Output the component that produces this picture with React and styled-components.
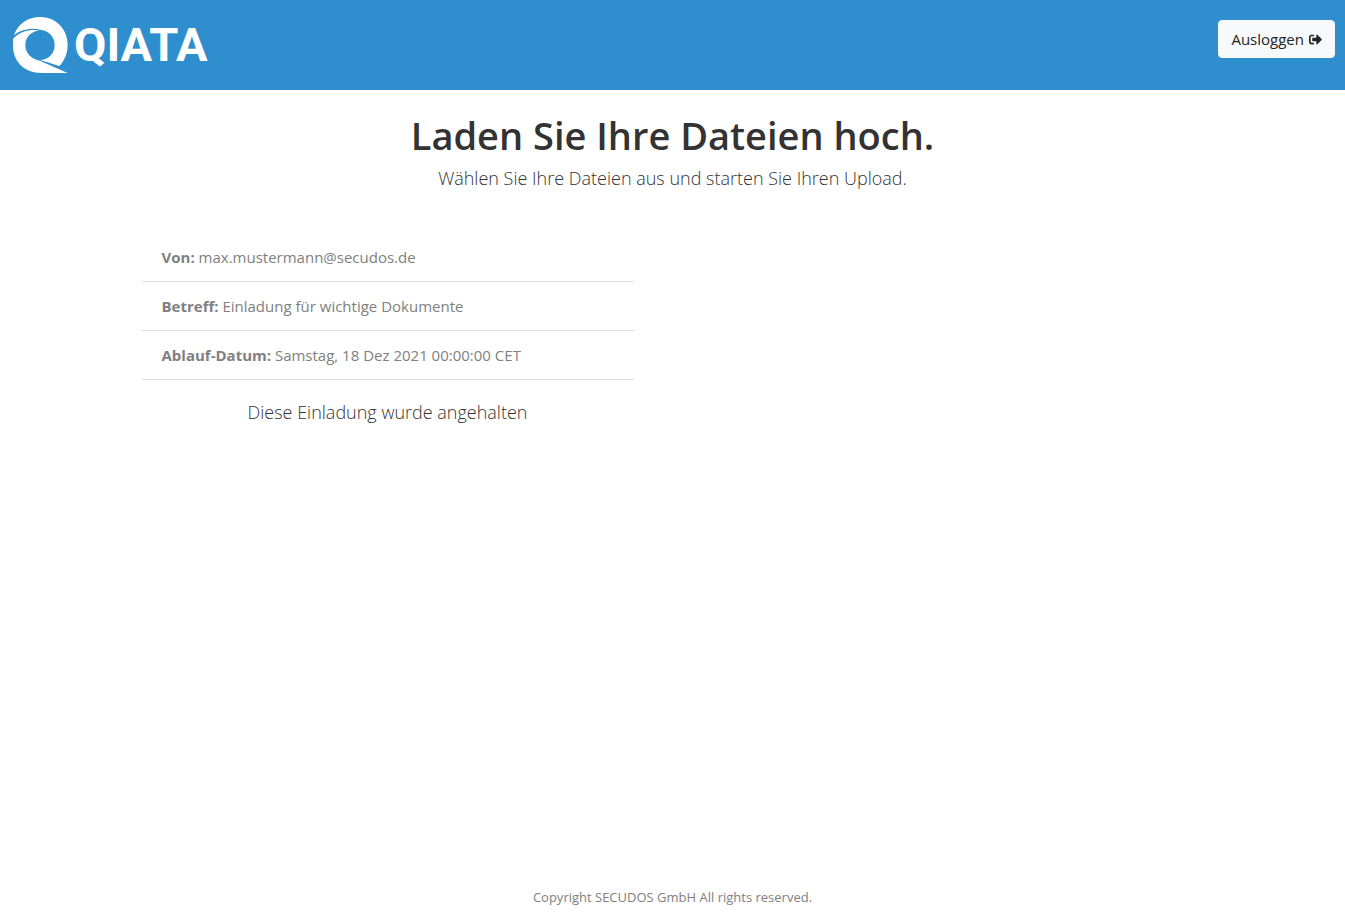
import React from 'react';
import styled, {createGlobalStyle} from 'styled-components';
import {FaSignOutAlt} from 'react-icons/fa';

const GlobalStyle = createGlobalStyle`
  *, *::before, *::after {
    box-sizing: border-box;
  }

  body {
    margin: 0;
    background: #fff;
    color: #212529;
    font-family: 'Segoe UI', 'Open Sans', 'Noto Sans', sans-serif;
    font-size: 15px;
    line-height: 24px;
  }
`;

const Page = styled.div`
  display: flex;
  flex-direction: column;
  min-height: 100vh;
`;

const Header = styled.header`
  display: flex;
  justify-content: space-between;
  align-items: flex-start;
  min-height: 90px;
  padding: 16px 10px 16px 12px;
  background: #2f8ece;
`;

const Brand = styled.a`
  display: flex;
  align-items: center;
  gap: 5px;
  color: #fff;
  text-decoration: none;
`;

const BrandMark = styled.svg`
  width: 57px;
  height: 58px;
  fill: currentColor;
`;

const BrandName = styled.span`
  font-family: Roboto, sans-serif;
  font-size: 47px;
  font-weight: 700;
  line-height: 58px;
`;

const LogoutButton = styled.button`
  display: flex;
  align-items: center;
  gap: 5px;
  margin-top: 4px;
  padding: 6px 12px;
  border: 1px solid #f8f9fa;
  border-radius: 4px;
  background: #f8f9fa;
  color: #212529;
  font: inherit;
  cursor: pointer;

  svg {
    width: 13px;
    height: 13px;
  }
`;

const Main = styled.main`
  flex: 1;
  padding: 21px 16px;
`;

const Intro = styled.div`
  margin-bottom: 41px;
  text-align: center;
`;

const Title = styled.h1`
  margin: 0 0 5px;
  color: #333;
  font-size: 38px;
  font-weight: 600;
  line-height: 48px;
`;

const Lead = styled.p`
  margin: 0;
  color: #333;
  font-size: 18px;
  font-weight: 300;
  line-height: 28px;
  text-align: center;
`;

const Columns = styled.div`
  display: grid;
  grid-template-columns: 1fr 1fr;
  gap: 78px;
  max-width: 1062px;
  margin: 0 auto;

  @media (max-width: 767px) {
    grid-template-columns: 1fr;
  }
`;

const DetailList = styled.ul`
  margin: 0 0 18px;
  padding: 0;
  list-style: none;
`;

const Detail = styled.li`
  padding: 12px 20px;
  border-bottom: 1px solid #dfdfdf;
  color: #808080;
`;

const Footer = styled.footer`
  padding: 0 16px 16px;
  color: #808080;
  font-size: 13px;
  line-height: 20px;
  text-align: center;
`;

const details = [
  {label: 'Von:', value: 'max.mustermann@secudos.de'},
  {label: 'Betreff:', value: 'Einladung für wichtige Dokumente'},
  {label: 'Ablauf-Datum:', value: 'Samstag, 18 Dez 2021 00:00:00 CET'},
];

const Logo = () => (
  <Brand href="#">
    <BrandMark viewBox="21 18 171 174" aria-hidden="true">
      <path d="M27 76C38 42 68 21 106 21c46 0 82 36 82 83 0 25-9 47-25 64l-58-18c26 0 44-20 44-45 0-26-18-43-44-46C80 53 48 58 27 76z" />
      <path d="M24 86C46 64 72 58 102 61 77 66 61 82 61 105c0 24 17 42 43 47l84 37h-76C58 190 24 154 24 108z" />
    </BrandMark>
    <BrandName>QIATA</BrandName>
  </Brand>
);

const App = () => {
  return (
    <>
      <GlobalStyle />
      <Page>
        <Header>
          <Logo />
          <LogoutButton type="button">
            Ausloggen
            <FaSignOutAlt aria-hidden="true" />
          </LogoutButton>
        </Header>
        <Main>
          <Intro>
            <Title>Laden Sie Ihre Dateien hoch.</Title>
            <Lead>Wählen Sie Ihre Dateien aus und starten Sie Ihren Upload.</Lead>
          </Intro>
          <Columns>
            <section>
              <DetailList>
                {details.map(({label, value}) => (
                  <Detail key={label}>
                    <strong>{label}</strong> {value}
                  </Detail>
                ))}
              </DetailList>
              <Lead>Diese Einladung wurde angehalten</Lead>
            </section>
          </Columns>
        </Main>
        <Footer>Copyright SECUDOS GmbH All rights reserved.</Footer>
      </Page>
    </>
  );
};

export default App;
